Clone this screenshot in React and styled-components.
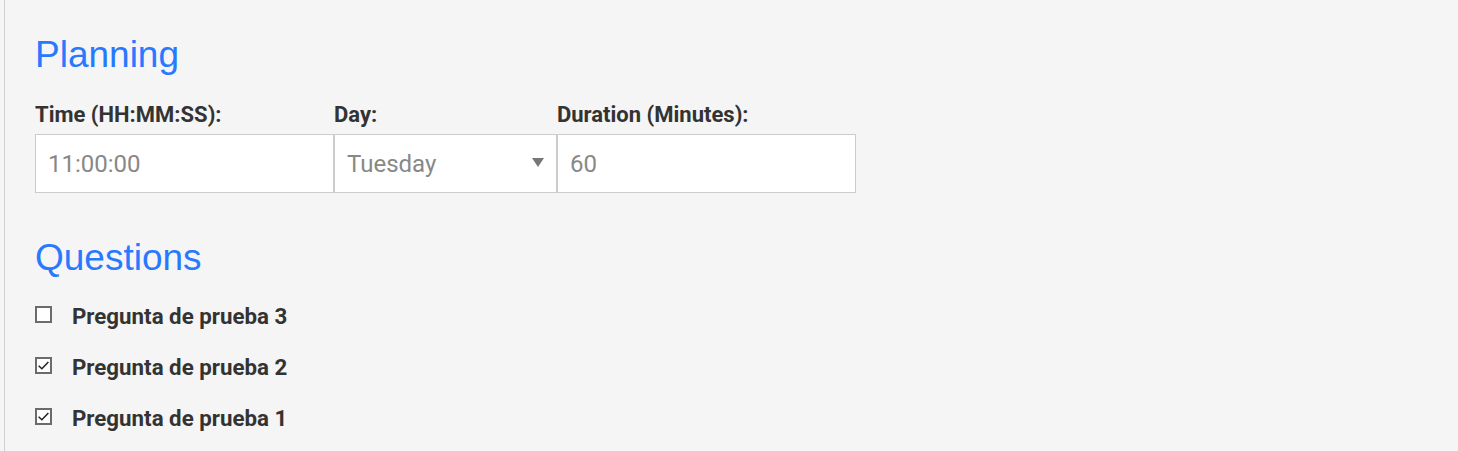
import React from 'react';
import styled, { createGlobalStyle } from 'styled-components';

const GlobalStyle = createGlobalStyle`
  html, body {
    margin: 0;
    padding: 0;
    background: #f5f5f5;
  }
  * {
    box-sizing: border-box;
  }
`;

const PageDIV = styled.div`
  margin-left: 4px;
  min-height: 451px;
  border-left: 1px solid #cfcfcf;
  padding: 34px 30px 0;
  font-family: Roboto, "Liberation Sans", sans-serif;
`;

const TitleH2 = styled.h2`
  margin: ${props => props.spaced ? '44px 0 0' : '0'};
  font-family: "Liberation Sans", Arial, sans-serif;
  font-size: 37px;
  font-weight: normal;
  line-height: normal;
  color: #2979ff;
`;

const FieldsROW = styled.div`
  display: flex;
  margin-top: 26px;
`;

const FieldDIV = styled.div`
  display: flex;
  flex-direction: column;
  width: ${props => props.width}px;
`;

const LabelSPAN = styled.label`
  font-size: 22px;
  font-weight: bold;
  color: #333;
  line-height: normal;
  margin-bottom: 7px;
  white-space: nowrap;
`;

const TextINPUT = styled.input`
  height: 59px;
  width: 100%;
  border: 1px solid #cccccc;
  background: #fff;
  padding: 0 12px;
  font-family: Roboto, "Liberation Sans", sans-serif;
  font-size: 24px;
  color: #888;
  outline: none;
`;

const SelectWRAP = styled.div`
  position: relative;
  height: 59px;
`;

const DaySELECT = styled.select`
  appearance: none;
  height: 59px;
  width: 100%;
  border: 1px solid #cccccc;
  background: #fff;
  padding: 0 12px;
  font-family: Roboto, "Liberation Sans", sans-serif;
  font-size: 24px;
  color: #888;
  outline: none;
`;

const ArrowSVG = styled.svg`
  position: absolute;
  right: 13px;
  top: 24px;
  pointer-events: none;
`;

const QuestionLIST = styled.div`
  display: flex;
  flex-direction: column;
  margin-top: 11px;
`;

const QuestionROW = styled.label`
  display: flex;
  align-items: center;
  height: 51px;
  gap: 20px;
  font-size: 22.3px;
  font-weight: bold;
  color: #333;
`;

const CheckBOX = styled.span`
  display: inline-flex;
  flex-shrink: 0;
  align-items: center;
  justify-content: center;
  width: 17px;
  height: 17px;
  margin-top: -3px;
  border: 2px solid #6b6b6b;
  background: #fff;
`;

const questions = [
  { id: 3, text: 'Pregunta de prueba 3', checked: false },
  { id: 2, text: 'Pregunta de prueba 2', checked: true },
  { id: 1, text: 'Pregunta de prueba 1', checked: true },
];

function Checkbox({ checked }) {
  return (
    <CheckBOX>
      {checked && (
        <svg width="13" height="13" viewBox="0 0 12 12">
          <path d="M1.5 6.2 L4.5 9 L10.5 2.8" fill="none" stroke="#222" strokeWidth="1.4" />
        </svg>
      )}
    </CheckBOX>
  );
}

export default function App() {
  return (
    <>
      <GlobalStyle />
      <PageDIV>
        <TitleH2>Planning</TitleH2>
        <FieldsROW>
          <FieldDIV width={299}>
            <LabelSPAN>Time (HH:MM:SS):</LabelSPAN>
            <TextINPUT defaultValue="11:00:00" />
          </FieldDIV>
          <FieldDIV width={223}>
            <LabelSPAN>Day:</LabelSPAN>
            <SelectWRAP>
              <DaySELECT defaultValue="Tuesday">
                <option>Monday</option>
                <option>Tuesday</option>
                <option>Wednesday</option>
                <option>Thursday</option>
                <option>Friday</option>
                <option>Saturday</option>
                <option>Sunday</option>
              </DaySELECT>
              <ArrowSVG width="12" height="9" viewBox="0 0 12 9">
                <path d="M0 0 H12 L6 9 Z" fill="#777" />
              </ArrowSVG>
            </SelectWRAP>
          </FieldDIV>
          <FieldDIV width={299}>
            <LabelSPAN>Duration (Minutes):</LabelSPAN>
            <TextINPUT defaultValue="60" />
          </FieldDIV>
        </FieldsROW>
        <TitleH2 spaced>Questions</TitleH2>
        <QuestionLIST>
          {questions.map(q => (
            <QuestionROW key={q.id}>
              <Checkbox checked={q.checked} />
              {q.text}
            </QuestionROW>
          ))}
        </QuestionLIST>
      </PageDIV>
    </>
  );
}
